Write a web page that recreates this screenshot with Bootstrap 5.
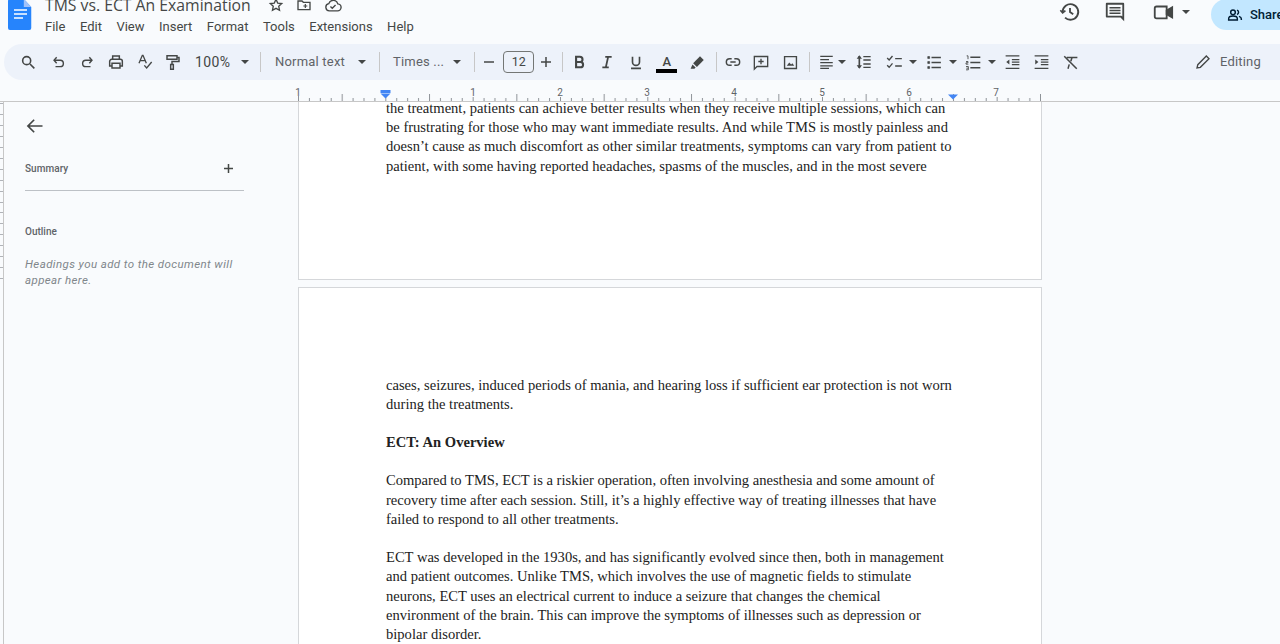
<!doctype html>
<html lang="en"><head><meta charset="utf-8">
<link href="https://cdn.jsdelivr.net/npm/bootstrap@5.3.0/dist/css/bootstrap.min.css" rel="stylesheet">
<style>
html,body{height:644px;overflow:hidden;margin:0;background:#f9fbfd;font-family:Roboto,"Open Sans",sans-serif;color:#444746}
svg{display:block;flex:none}
.topbar{height:44px;overflow:hidden;padding-left:7px}
.doclogo{width:26px;height:31px;margin-top:-1px}
.titlecol{margin-left:12px;margin-top:-6px}
.doctitle{font-size:15.75px;line-height:22px;color:#444746;font-family:"Open Sans",Roboto,sans-serif;white-space:nowrap}
.titleicons{gap:12px;margin-left:17px}
.menus{gap:14.5px;font-size:13px;line-height:18px;margin-top:2px;color:#444746}
.rightacts{margin-left:auto}
.hist{margin-top:1px}
.cmt{margin:1px 0 0 23px}
.vid{margin:1px 0 0 26px}
.vidcaret{margin:-20px 0 0 8px}
.sharepill{width:69px;height:31px;margin:-1px 0 0 21px;background:#c2e7ff;border-radius:16px 0 0 16px;font-size:13px;font-weight:500;color:#001d35;padding-left:16px;gap:7px;overflow:hidden;white-space:nowrap}
.toolpill{height:36px;margin-left:4px;background:#edf2fa;border-radius:18px 0 0 18px;padding-left:16px;font-size:13px;color:#444746;white-space:nowrap}
.toolsep{width:1px;height:20px;background:#c7c7c7;flex:none}
.tb{display:flex;align-items:center;justify-content:center;flex:none}
.caretd{width:0;height:0;border-left:4px solid transparent;border-right:4px solid transparent;border-top:4px solid #444746;flex:none}
.sizebox{width:31px;height:22px;border:1px solid #747775;border-radius:4px;font-size:12.5px;line-height:20px;text-align:center;flex:none}
.w12{width:12px}.w14{width:14px}.w16{width:16px}.w17{width:17px}.w21{width:21px}
.m4{margin-left:4px}.m6{margin-left:6px}.m7{margin-left:7px}.m8{margin-left:8px}.m9{margin-left:9px}.m10{margin-left:10px}.m11{margin-left:11px}.m12{margin-left:12px}.m13{margin-left:13px}.m14{margin-left:14px}.m15{margin-left:15px}
.zoomval{font-size:14px;letter-spacing:.35px;width:36px;flex:none}
.softlabel{color:#5f6368;letter-spacing:.2px}
.fontcolor{font-size:13px;line-height:13px;font-weight:500}
.colorbar{width:21px;height:4px;background:#000;margin:1px 0 -3px}
.editmode{padding-right:19px;gap:9px;color:#5f6368;font-size:13px;letter-spacing:.2px}
.rulerband{height:22px;border-bottom:1px solid #c7c7c7}
.bodyarea{height:542px;overflow:hidden}
.vruler{width:4px;border-right:1px solid #c7c7c7;flex:none;background:repeating-linear-gradient(transparent 0 9.9px,#b0b3b8 9.9px 10.9px) no-repeat 0 -8.5px/100% 186px}
.outline{width:294px;flex:none;padding:14px 0 0 21px}
.summaryline{width:219px;height:28px;border-bottom:1px solid #bdc1c6;font-size:10px;font-weight:500;color:#5f6368;margin-top:27px;padding-right:10px}
.summarytext{line-height:13px;margin-top:-1px;letter-spacing:.05px}
.outlinehead{font-size:10px;font-weight:500;color:#5f6368;margin-top:34px;line-height:13px}
.outlinehint{font-size:11.5px;font-style:italic;color:#80868b;line-height:15.5px;margin-top:19px;letter-spacing:.4px;white-space:nowrap}
.sheet{width:744px;background:#fff;border:1px solid #d5d7da;border-top:0;height:178px;padding:0 0 0 87px;font-family:"Liberation Serif",serif;font-size:14.57px;line-height:19.2px;color:#222;white-space:nowrap;overflow:hidden}
.sheet2{border-top:1px solid #d5d7da;border-bottom:0;height:400px;margin-top:7px;padding-top:87.5px}
.scrolled{line-height:13.2px;margin-bottom:3px}
.gapline{height:19.2px}
</style></head><body>

<div class="topbar d-flex">
  <svg class="doclogo" viewBox="0 0 26 31"><path d="M2 0h15l8 8v21a2 2 0 0 1-2 2H2a2 2 0 0 1-2-2V2a2 2 0 0 1 2-2z" fill="#2684fc" transform="translate(1 0) scale(.93 1)"/><path d="M17 0l8 8h-8z" fill="#a1c2fa" transform="translate(1 0) scale(.93 1)"/><path d="M7 12h13M7 16h13M7 20h9" stroke="#fff" stroke-width="1.4" transform="translate(0 -1)"/></svg>
  <div class="titlecol">
    <div class="d-flex align-items-center">
      <span class="doctitle">TMS vs. ECT An Examination</span>
      <div class="d-flex titleicons">
        <svg width="16" height="16" viewBox="0 0 24 24" fill="none" stroke="#444746" stroke-width="2"><path d="M12 3.500l2.600 5.600 6 .7-4.500 4.100 1.200 6L12 17l-5.300 2.900 1.200-6-4.500-4.100 6-.7z"/></svg>
        <svg width="16" height="16" viewBox="0 0 24 24" fill="none" stroke="#444746" stroke-width="2"><path d="M3 6h6l2 2h10v11H3z"/><path d="M11 13.500h6M14 10.500v6" stroke-width="1.800"/></svg>
        <svg width="18" height="16" viewBox="0 0 24 22" fill="none" stroke="#444746" stroke-width="1.900"><path d="M7 19a5 5 0 0 1-.8-9.900A6.500 6.500 0 0 1 18.600 9.400 4.800 4.800 0 0 1 18 19z"/><path d="M8.500 13l2.500 2.500 4.500-4.500"/></svg>
      </div>
    </div>
    <div class="d-flex menus"><span>File</span><span>Edit</span><span>View</span><span>Insert</span><span>Format</span><span>Tools</span><span>Extensions</span><span>Help</span></div>
  </div>
  <div class="rightacts d-flex">
    <svg class="hist" width="22" height="22" viewBox="0 0 24 24" fill="none" stroke="#444746" stroke-width="2"><path d="M4 12a8.500 8.500 0 1 1 2.600 6.100"/><path d="M1.500 10l2.500 3 3-2.500" stroke-width="1.800"/><path d="M12 7.500V12l3.500 2.500"/></svg>
    <svg class="cmt" width="22" height="22" viewBox="0 0 24 24" fill="#444746"><path d="M3 2h18a1 1 0 0 1 1 1v19l-4-4H3a1 1 0 0 1-1-1V3a1 1 0 0 1 1-1zm1 2v12h15l1 1V4z"/><path d="M6 6.500h12v1.800H6zM6 9.500h12v1.800H6zM6 12.500h12v1.800H6z"/></svg>
    <svg class="vid" width="22" height="22" viewBox="0 0 24 24" fill="none" stroke="#444746" stroke-width="2"><path d="M3 8a2 2 0 0 1 2-2h11v13H5a2 2 0 0 1-2-2z"/><path d="M16 10.500l6-3.500v11l-6-3.500z" fill="#444746"/></svg>
    <span class="caretd align-self-center vidcaret"></span>
    <div class="sharepill d-flex align-items-center">
      <svg width="16" height="16" viewBox="0 0 24 24" fill="none" stroke="#001d35" stroke-width="2.200"><circle cx="9" cy="8" r="3.500"/><path d="M2.500 19.500v-2c0-2.500 3-4 6.500-4s6.500 1.500 6.500 4v2z"/><path d="M15 4.700a3.500 3.500 0 0 1 0 6.600M18 14c2 .7 3.500 2 3.500 3.500v2"/></svg>
      <span>Share</span>
    </div>
  </div>
</div>

<div class="toolpill d-flex align-items-center">
  <div class="tb w16"><svg width="16" height="16" viewBox="0 0 24 24" fill="none" stroke="#444746" stroke-width="2.400"><circle cx="10" cy="10" r="6"/><path d="M15 15l6.500 6.500"/></svg></div>
  <div class="tb w16 m15"><svg width="14" height="14" viewBox="0 0 24 24" fill="none" stroke="#444746" stroke-width="2.400"><path d="M8 4L3.500 9 8 14"/><path d="M4 9h10a5.500 5.500 0 0 1 0 11H6"/></svg></div>
  <div class="tb w16 m12"><svg width="14" height="14" viewBox="0 0 24 24" fill="none" stroke="#444746" stroke-width="2.400"><path d="M16 4l4.500 5L16 14"/><path d="M20 9H10a5.500 5.500 0 0 0 0 11h8"/></svg></div>
  <div class="tb w16 m13"><svg width="16" height="16" viewBox="0 0 24 24" fill="none" stroke="#444746" stroke-width="2.200"><path d="M7 8V3h10v5"/><path d="M6 18H2.500v-7a3 3 0 0 1 3-3h13a3 3 0 0 1 3 3v7H18"/><path d="M6 14h12v7H6z"/></svg></div>
  <div class="tb w16 m13"><svg width="16" height="16" viewBox="0 0 24 24" fill="none" stroke="#444746" stroke-width="2"><path d="M3 14L8 2h1l5 12M5 10h7"/><path d="M11 17l3.500 4L22 12"/></svg></div>
  <div class="tb w16 m12"><svg width="16" height="17" viewBox="0 0 24 24" fill="none" stroke="#444746" stroke-width="2.200"><path d="M3 2h15v5H3z"/><path d="M18 4.500h3v6H10.500v4"/><path d="M8.500 15h4v7h-4z"/></svg></div>
  <span class="zoomval m14">100%</span>
  <span class="caretd m10"></span>
  <span class="toolsep m11"></span>
  <span class="softlabel m14">Normal text</span>
  <span class="caretd m13"></span>
  <span class="toolsep m13"></span>
  <span class="softlabel m13">Times ...</span>
  <span class="caretd m9"></span>
  <span class="toolsep m13"></span>
  <div class="tb w12 m8"><svg width="12" height="12" viewBox="0 0 12 12"><path d="M1 6h10" stroke="#444746" stroke-width="1.500"/></svg></div>
  <div class="sizebox m8">12</div>
  <div class="tb w12 m6"><svg width="12" height="12" viewBox="0 0 12 12"><path d="M1 6h10M6 1v10" stroke="#444746" stroke-width="1.500"/></svg></div>
  <span class="toolsep m10"></span>
  <div class="tb w14 m9"><svg width="14" height="14" viewBox="0 0 24 24" fill="none" stroke="#444746" stroke-width="3.600"><path d="M7 3h6.500a4.500 4.500 0 0 1 0 9H7zM7 12h7.500a4.500 4.500 0 0 1 0 9H7z"/></svg></div>
  <div class="tb w14 m14"><svg width="14" height="14" viewBox="0 0 24 24" fill="none" stroke="#444746" stroke-width="3"><path d="M9 3h11M4 21h11M14 3L10 21"/></svg></div>
  <div class="tb w14 m15"><svg width="14" height="15" viewBox="0 0 24 24" fill="none" stroke="#444746" stroke-width="2.800"><path d="M6 2v9a6 6 0 0 0 12 0V2M3.500 22h17"/></svg></div>
  <div class="tb flex-column w21 m13"><span class="fontcolor">A</span><span class="colorbar"></span></div>
  <div class="tb w16 m12"><svg width="15" height="15" viewBox="0 0 24 24" fill="#444746"><path d="M16 2l6 6L11 19l-6-6z"/><path d="M4 15l5 5-2 2H1z"/></svg></div>
  <span class="toolsep m11"></span>
  <div class="tb w16 m8"><svg width="16" height="16" viewBox="0 0 24 24" fill="none" stroke="#444746" stroke-width="2.200"><path d="M10 7H7a5 5 0 0 0 0 10h3M14 7h3a5 5 0 0 1 0 10h-3M8 12h8"/></svg></div>
  <div class="tb w16 m12"><svg width="16" height="17" viewBox="0 0 24 24" fill="none" stroke="#444746" stroke-width="2"><path d="M2 3h20v15H6l-4 4z"/><path d="M12 6.500v8M8 10.500h8"/></svg></div>
  <div class="tb w16 m13"><svg width="15" height="15" viewBox="0 0 24 24" fill="none" stroke="#444746" stroke-width="2.200"><path d="M2.500 2.500h19v19h-19z"/><path d="M6 17l4-5 3 3 2-2 3 4z" fill="#444746" stroke="none"/></svg></div>
  <span class="toolsep m11"></span>
  <div class="tb w16 m8"><svg width="15" height="16" viewBox="0 0 24 24" stroke="#444746" stroke-width="2"><path d="M2 3h20M2 8h14M2 13h20M2 18h20M2 22h14"/></svg></div>
  <span class="caretd m4"></span>
  <div class="tb w16 m10"><svg width="16" height="16" viewBox="0 0 24 24" fill="none" stroke="#444746" stroke-width="2"><path d="M11 4h11M11 9h11M11 15h11M11 20h11"/><path d="M5 3v18" stroke-width="2.500"/><path d="M1 7l4-5 4 5zM1 17l4 5 4-5z" fill="#444746" stroke="none"/></svg></div>
  <div class="tb w17 m14"><svg width="17" height="16" viewBox="0 0 24 24" fill="none" stroke="#444746" stroke-width="2"><path d="M1 6l3 3 5-6M1 17l3 3 5-6"/><path d="M13 7h10M13 18h10"/></svg></div>
  <span class="caretd m6"></span>
  <div class="tb w16 m9"><svg width="16" height="15" viewBox="0 0 24 24" fill="none" stroke="#444746" stroke-width="2.400"><path d="M8 4h15M8 12h15M8 20h15"/><path d="M2 2.500h3v3H2zM2 10.500h3v3H2zM2 18.500h3v3H2z" fill="#444746" stroke-width="1"/></svg></div>
  <span class="caretd m7"></span>
  <div class="tb w16 m8"><svg width="16" height="17" viewBox="0 0 24 24" fill="none" stroke="#444746" stroke-width="2.200"><path d="M8 4h15M8 12h15M8 20h15"/><path d="M2.500 2h2v5M1.500 10.500h3v2h-3v2h3.500M1.500 18h3.500v5H1.500M2 20.500h3" stroke-width="1.300"/></svg></div>
  <span class="caretd m7"></span>
  <div class="tb w16 m8"><svg width="15" height="16" viewBox="0 0 24 24" fill="none" stroke="#444746" stroke-width="2"><path d="M1 2h22M11 8h12M11 12h12M11 16h12M1 22h22"/><path d="M7 8l-5 4 5 4z" fill="#444746" stroke="none"/></svg></div>
  <div class="tb w16 m13"><svg width="15" height="16" viewBox="0 0 24 24" fill="none" stroke="#444746" stroke-width="2"><path d="M1 2h22M11 8h12M11 12h12M11 16h12M1 22h22"/><path d="M2 8l5 4-5 4z" fill="#444746" stroke="none"/></svg></div>
  <div class="tb w16 m13"><svg width="15" height="15" viewBox="0 0 24 24" fill="none" stroke="#444746" stroke-width="2.400"><path d="M2 2l20 20M6 4h17M14.500 4l-2 6M10 15l-2 7"/></svg></div>
  <div class="d-flex align-items-center ms-auto editmode">
    <svg width="16" height="16" viewBox="0 0 24 24" fill="none" stroke="#444746" stroke-width="2"><path d="M3 21l1.200-5L17 3l4 4L8 20z"/></svg>
    <span>Editing</span>
  </div>
</div>

<div class="rulerband">
  <svg width="1280" height="21" viewBox="0 0 1280 21">
    <defs><pattern id="rticks" x="298" y="0" width="87.330" height="21" patternUnits="userSpaceOnUse">
      <path d="M.5 17v4M11.400 18v3M22.300 18v3M33.200 18v3M44.200 14v7M55.100 18v3M66 18v3M76.900 18v3" stroke="#8e9398" fill="none"/></pattern></defs>
    <rect x="298" y="0" width="743" height="21" fill="url(#rticks)"/>
    <path d="M298.500 16v5M1040.500 14v7" stroke="#8e9398"/>
    <g font-family="Roboto,sans-serif" font-size="10" fill="#5f6368" text-anchor="middle">
      <text x="298" y="16">1</text><text x="473" y="16">1</text><text x="560" y="16">2</text><text x="647" y="16">3</text><text x="734" y="16">4</text><text x="822" y="16">5</text><text x="909" y="16">6</text><text x="996" y="16">7</text>
    </g>
    <rect x="380.500" y="10" width="10" height="3" fill="#4285f4"/><path d="M380.500 13.500h10l-5 5z" fill="#4285f4"/>
    <path d="M948 14.500h10l-5 5z" fill="#4285f4"/>
  </svg>
</div>

<div class="bodyarea d-flex">
  <div class="vruler"></div>
  <aside class="outline">
    <svg width="20" height="20" viewBox="0 0 24 24" fill="none" stroke="#444746" stroke-width="2"><path d="M21 12H4M11 4.500L3.500 12l7.500 7.500"/></svg>
    <div class="summaryline d-flex justify-content-between align-items-start">
      <span class="summarytext">Summary</span>
      <svg width="11" height="11" viewBox="0 0 11 11"><path d="M1 5.500h9M5.500 1v9" stroke="#444746" stroke-width="1.500"/></svg>
    </div>
    <div class="outlinehead">Outline</div>
    <div class="outlinehint">Headings you add to the document will<br>appear here.</div>
  </aside>
  <main>
    <div class="sheet">
      <div class="scrolled">the treatment, patients can achieve better results when they receive multiple sessions, which can</div>
      <div>be frustrating for those who may want immediate results. And while TMS is mostly painless and</div>
      <div>doesn’t cause as much discomfort as other similar treatments, symptoms can vary from patient to</div>
      <div>patient, with some having reported headaches, spasms of the muscles, and in the most severe</div>
    </div>
    <div class="sheet sheet2">
      <div>cases, seizures, induced periods of mania, and hearing loss if sufficient ear protection is not worn</div>
      <div>during the treatments.</div>
      <div class="gapline"></div>
      <div class="fw-bold">ECT: An Overview</div>
      <div class="gapline"></div>
      <div>Compared to TMS, ECT is a riskier operation, often involving anesthesia and some amount of</div>
      <div>recovery time after each session. Still, it’s a highly effective way of treating illnesses that have</div>
      <div>failed to respond to all other treatments.</div>
      <div class="gapline"></div>
      <div>ECT was developed in the 1930s, and has significantly evolved since then, both in management</div>
      <div>and patient outcomes. Unlike TMS, which involves the use of magnetic fields to stimulate</div>
      <div>neurons, ECT uses an electrical current to induce a seizure that changes the chemical</div>
      <div>environment of the brain. This can improve the symptoms of illnesses such as depression or</div>
      <div>bipolar disorder.</div>
    </div>
  </main>
</div>
<script src="https://cdn.jsdelivr.net/npm/bootstrap@5.3.0/dist/js/bootstrap.bundle.min.js"></script>
</body></html>
